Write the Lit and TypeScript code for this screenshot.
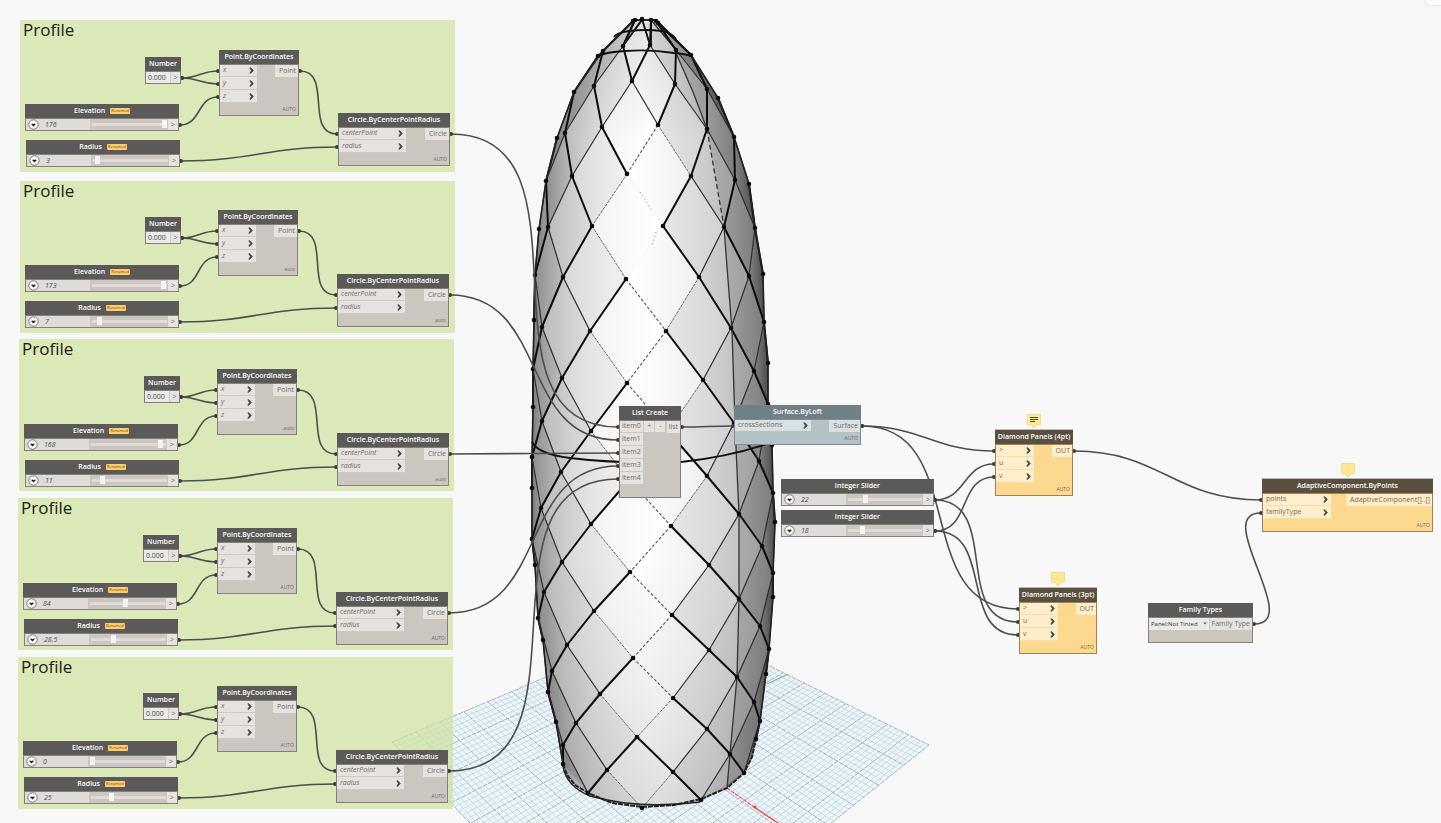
import { LitElement, html, svg, css, nothing } from "lit";
import { customElement, property } from "lit/decorators.js";
import { classMap } from "lit/directives/class-map.js";
import { styleMap } from "lit/directives/style-map.js";

type Pt = [number, number];

interface GraphNode {
  id: string;
  kind: "number" | "slider" | "function" | "list" | "types";
  title: string;
  x: number;
  y: number;
  w: number;
  tone?: "stone" | "steel" | "amber";
  inputs?: string[];
  inputWidth?: number;
  italic?: boolean;
  output?: string;
  lacing?: string;
  value?: string;
  max?: number;
  renamed?: boolean;
  note?: "lines" | "blank";
}

interface Group {
  x: number;
  y: number;
}

/* ---------- graph data ---------- */

const HEADER = 14;
const ROW = 13;

interface ProfileSpec {
  group: Pt;
  number: Pt;
  point: Pt;
  elevation: Pt;
  radius: Pt;
  circle: Pt;
  elevationValue: string;
  radiusValue: string;
  lacing: string;
}

const profiles: ProfileSpec[] = [
  { group: [20, 20], number: [145, 57], point: [219, 50], elevation: [25, 104], radius: [26, 140], circle: [338, 113], elevationValue: "176", radiusValue: "3", lacing: "AUTO" },
  { group: [20, 181], number: [145, 217], point: [218, 210], elevation: [25, 265], radius: [25, 301], circle: [337, 274], elevationValue: "173", radiusValue: "7", lacing: "auto" },
  { group: [19, 339], number: [144, 376], point: [217, 369], elevation: [24, 424], radius: [25, 460], circle: [337, 433], elevationValue: "168", radiusValue: "11", lacing: "auto" },
  { group: [18, 498], number: [143, 535], point: [217, 528], elevation: [23, 583], radius: [24, 619], circle: [336, 592], elevationValue: "84", radiusValue: "28.5", lacing: "AUTO" },
  { group: [18, 657], number: [143, 693], point: [217, 686], elevation: [23, 741], radius: [24, 777], circle: [336, 750], elevationValue: "0", radiusValue: "25", lacing: "AUTO" },
];

const groups: Group[] = profiles.map((p) => ({ x: p.group[0], y: p.group[1] }));

const nodes: GraphNode[] = [
  ...profiles.flatMap((p, i): GraphNode[] => [
    { id: `number${i}`, kind: "number", title: "Number", x: p.number[0], y: p.number[1], w: 36, value: "0.000" },
    { id: `point${i}`, kind: "function", title: "Point.ByCoordinates", x: p.point[0], y: p.point[1], w: 80, inputs: ["x", "y", "z"], inputWidth: 37, italic: true, output: "Point", lacing: p.lacing },
    { id: `elevation${i}`, kind: "slider", title: "Elevation", x: p.elevation[0], y: p.elevation[1], w: 154, value: p.elevationValue, max: 176, renamed: true },
    { id: `radius${i}`, kind: "slider", title: "Radius", x: p.radius[0], y: p.radius[1], w: 154, value: p.radiusValue, max: 100, renamed: true },
    { id: `circle${i}`, kind: "function", title: "Circle.ByCenterPointRadius", x: p.circle[0], y: p.circle[1], w: 112, inputs: ["centerPoint", "radius"], inputWidth: 67, italic: true, output: "Circle", lacing: p.lacing },
  ]),
  { id: "list", kind: "list", title: "List Create", x: 619, y: 406, w: 62, inputs: ["item0", "item1", "item2", "item3", "item4"], inputWidth: 23, output: "list" },
  { id: "loft", kind: "function", tone: "steel", title: "Surface.ByLoft", x: 734, y: 405, w: 127, inputs: ["crossSections"], inputWidth: 76, output: "Surface", lacing: "AUTO" },
  { id: "u", kind: "slider", title: "Integer Slider", x: 781, y: 479, w: 153, value: "22", max: 100 },
  { id: "v", kind: "slider", title: "Integer Slider", x: 781, y: 510, w: 153, value: "18", max: 100 },
  { id: "four", kind: "function", tone: "amber", title: "Diamond Panels (4pt)", x: 995, y: 430, w: 78, inputs: [">", "u", "v"], inputWidth: 38, output: "OUT", lacing: "AUTO", note: "lines" },
  { id: "three", kind: "function", tone: "amber", title: "Diamond Panels (3pt)", x: 1019, y: 588, w: 78, inputs: [">", "u", "v"], inputWidth: 38, output: "OUT", lacing: "AUTO", note: "blank" },
  { id: "adaptive", kind: "function", tone: "amber", title: "AdaptiveComponent.ByPoints", x: 1262, y: 479, w: 171, inputs: ["points", "familyType"], inputWidth: 68, output: "AdaptiveComponent[]..[]", lacing: "AUTO", note: "blank" },
  { id: "types", kind: "types", title: "Family Types", x: 1148, y: 603, w: 105, value: "Panel:Not Tinted", output: "Family Type" },
];

const links: [string, string, number][] = [
  ...profiles.flatMap((_, i): [string, string, number][] => [
    [`number${i}`, `point${i}`, 0],
    [`number${i}`, `point${i}`, 1],
    [`elevation${i}`, `point${i}`, 2],
    [`point${i}`, `circle${i}`, 0],
    [`radius${i}`, `circle${i}`, 1],
    [`circle${i}`, "list", i],
  ]),
  ["list", "loft", 0],
  ["loft", "four", 0],
  ["loft", "three", 0],
  ["u", "four", 1],
  ["v", "four", 2],
  ["u", "three", 1],
  ["v", "three", 2],
  ["four", "adaptive", 0],
  ["types", "adaptive", 1],
];

const byId = new Map(nodes.map((n) => [n.id, n]));
const outPort = (n: GraphNode): Pt => [n.x + n.w + 1, n.y + HEADER + 7];
const inPort = (n: GraphNode, i: number): Pt => [n.x - 1, n.y + HEADER + 7 + ROW * i];

/* ---------- tower geometry ---------- */

const tower: Pt[][] = [
  [[633, 21], [635, 20], [642, 19], [651, 20], [656, 21], [658, 23]],
  [[598, 56], [603, 51], [623, 46], [650, 45], [676, 50], [691, 55]],
  [[574, 92], [594, 86], [632, 81], [675, 84], [707, 89], [718, 98]],
  [[557, 138], [565, 133], [602, 127], [658, 125], [707, 129], [734, 137]],
  [[546, 181], [572, 176], [627, 174], [691, 176], [735, 180], [749, 184]],
  [[539, 229], [548, 227], [592, 226], [663, 226], [724, 227], [755, 228]],
  [[535, 275], [563, 277], [626, 279], [699, 277], [749, 276], [763, 274]],
  [[534, 320], [542, 327], [590, 331], [666, 331], [731, 328], [764, 322]],
  [[533, 369], [562, 378], [627, 383], [703, 380], [754, 371], [768, 363]],
  [[533, 407], [542, 421], [591, 431], [668, 431], [734, 423], [768, 404]],
  [[532, 457], [561, 472], [629, 480], [707, 476], [759, 461], [772, 445]],
  [[532, 488], [541, 508], [591, 524], [671, 526], [739, 514], [773, 493]],
  [[532, 539], [562, 562], [630, 572], [709, 565], [762, 546], [775, 522]],
  [[535, 565], [544, 592], [594, 611], [672, 615], [739, 599], [773, 573]],
  [[538, 618], [567, 645], [633, 658], [709, 650], [760, 626], [773, 597]],
  [[543, 640], [552, 671], [600, 694], [673, 698], [737, 677], [769, 649]],
  [[548, 692], [576, 723], [637, 737], [707, 729], [754, 702], [766, 674]],
  [[556, 722], [563, 745], [607, 770], [673, 772], [730, 754], [760, 721]],
  [[563, 764], [588, 793], [642, 808], [701, 800], [744, 773], [756, 739]],
];

const shadeEven = [["#7a7a7a", "#a0a0a0"], ["#bababa", "#dedede"], ["#f4f4f4", "#ffffff"], ["#e6e6e6", "#d2d2d2"], ["#b4b4b4", "#909090"], ["#777777", "#4c4c4c"]];
const shadeOdd = [["#6c6c6c", "#8a8a8a"], ["#8e8e8e", "#bcbcbc"], ["#d8d8d8", "#f2f2f2"], ["#ffffff", "#f0f0f0"], ["#d4d4d4", "#b8b8b8"], ["#989898", "#585858"]];

const pts = (list: Pt[]) => list.map((p) => p.join(",")).join(" ");

const left = tower.map((r) => r[0]);
const right = tower.map((r) => r[5]);
const base: Pt[] = [[563, 764], [567, 775], [575, 785], [588, 793], [612, 803], [642, 807], [674, 805], [701, 799], [727, 788], [744, 773], [752, 757], [756, 739]];
const outline: Pt[] = [...left, ...base, ...right.slice().reverse()];
const seam: Pt[] = [[676, 53], [693, 92], [707, 129], [724, 227], [728, 280], [732, 330], [735, 424], [737, 470], [739, 514], [739, 599], [737, 677], [730, 754], [727, 788]];

function facets() {
  const out = [];
  const last = tower.length - 1;
  for (let k = -1; k < last; k++) {
    for (let i = 0; i < 6; i++) {
      const row = k + 1;
      const even = row % 2 === 0;
      const top = tower[Math.max(k, 0)][i];
      const bottom = tower[Math.min(k + 2, last)][i];
      // neighbours sit in the row between the top and bottom corners
      const mid = tower[row];
      const l = even ? mid[i - 1] : mid[i];
      const r = even ? mid[i] : mid[i + 1];
      if (!l || !r) continue;
      const name = even ? `odd${i}` : `even${i}`;
      const corners = k < 0 ? [l, r, bottom] : k + 2 > last ? [top, r, l] : [top, r, bottom, l];
      out.push(svg`<polygon points=${pts(corners)} fill="url(#${name})" />`);
    }
  }
  return out;
}

function ribs() {
  const out = [];
  for (let k = 0; k < tower.length - 1; k++) {
    const even = k % 2 === 0;
    for (let i = 0; i < 6; i++) {
      const from = tower[k][i];
      const ends: [Pt | undefined, boolean, number][] = even
        ? [[tower[k + 1][i], true, i], [tower[k + 1][i + 1], false, i + 1]]
        : [[tower[k + 1][i - 1], true, i], [tower[k + 1][i], false, i]];
      for (const [to, leaning, col] of ends) {
        if (!to) continue;
        const mid = (from[0] + to[0]) / 2;
        const leftSide = mid < 640;
        const strong = k < 5 ? leaning !== leftSide : leaning === leftSide;
        const centre = mid > 628 && mid < 662 && k > 1;
        if (centre && (k === 4 || k === 5) && col === 3) continue;
        let cls = strong ? "rib strong" : "rib";
        if (centre && k < 15 && k !== 2) cls = strong || !leftSide ? "rib broken" : "rib faint";
        else if (!strong && mid > 596 && mid < 690 && k > 2) cls = "rib faint";
        out.push(svg`<line class=${cls} x1=${from[0]} y1=${from[1]} x2=${to[0]} y2=${to[1]} />`);
      }
    }
  }
  return out;
}

/* ---------- ground grid ---------- */

const ground = { l: [392, 742] as Pt, t: [679, 621] as Pt, r: [929, 745] as Pt, b: [627, 986] as Pt };
const lerp = (a: Pt, b: Pt, t: number): Pt => [a[0] + (b[0] - a[0]) * t, a[1] + (b[1] - a[1]) * t];

function gridPath(major: boolean) {
  const steps = 60;
  let d = "";
  for (let i = 0; i <= steps; i++) {
    if ((i % 5 === 0) !== major) continue;
    const t = i / steps;
    const a = lerp(ground.l, ground.t, t);
    const b = lerp(ground.b, ground.r, t);
    const c = lerp(ground.l, ground.b, t);
    const e = lerp(ground.t, ground.r, t);
    d += `M${a[0].toFixed(1)} ${a[1].toFixed(1)}L${b[0].toFixed(1)} ${b[1].toFixed(1)}`;
    d += `M${c[0].toFixed(1)} ${c[1].toFixed(1)}L${e[0].toFixed(1)} ${e[1].toFixed(1)}`;
  }
  return d;
}

/* ---------- geometry preview ---------- */

@customElement("tower-preview")
export class TowerPreview extends LitElement {
  static styles = css`
    :host { display: block; width: 100%; height: 100%; }
    svg { display: block; width: 100%; height: 100%; overflow: visible; }
    .rib { stroke: #2e2e2e; stroke-width: 1.2; }
    .strong { stroke: #0c0c0c; stroke-width: 2; }
    .faint { stroke: #6a6a6a; stroke-width: 1; stroke-dasharray: 3 1; }
    .broken { stroke: #555; stroke-width: 1.1; stroke-dasharray: 3 2; }
    .edge { fill: none; stroke: #222; stroke-width: 1.6; stroke-linejoin: round; }
    .rim { stroke-width: 2; stroke-dasharray: 5 1; }
    .ring { fill: none; stroke: #111; stroke-width: 1.8; }
    .seam { fill: none; stroke: #333; stroke-width: 1.3; }
    .knot { fill: #0c0c0c; }
  `;

  render() {
    return html`
      <svg role="img" aria-label="Panelised tower">
        <defs>
          ${[["even", shadeEven], ["odd", shadeOdd]].map(([name, set]) =>
            (set as string[][]).map((s, i) => svg`
              <linearGradient id="${name}${i}">
                <stop offset="0" stop-color=${s[0]} />
                <stop offset="1" stop-color=${s[1]} />
              </linearGradient>`)
          )}
          <linearGradient id="shell">
            <stop offset="0" stop-color="#6a6a6a" />
            <stop offset="0.2" stop-color="#c8c8c8" />
            <stop offset="0.5" stop-color="#eeeeee" />
            <stop offset="0.8" stop-color="#b0b0b0" />
            <stop offset="1" stop-color="#474747" />
          </linearGradient>
          <linearGradient id="dim" x1="0" y1="0" x2="0" y2="1">
            <stop offset="0" stop-color="#000" stop-opacity="0.1" />
            <stop offset="0.15" stop-color="#000" stop-opacity="0" />
            <stop offset="0.68" stop-color="#000" stop-opacity="0" />
            <stop offset="0.85" stop-color="#000" stop-opacity="0.05" />
            <stop offset="1" stop-color="#000" stop-opacity="0.12" />
          </linearGradient>
        </defs>
        <polygon points=${pts([ground.l, ground.t, ground.r, ground.b])} fill="#eef5f9" />
        <path d=${gridPath(false)} fill="none" stroke="#b6d3e2" stroke-width="0.7" />
        <path d=${gridPath(true)} fill="none" stroke="#8ea4b1" stroke-width="0.8" stroke-dasharray="5 1" />
        <path d="M767 684L788 674" stroke="#5fbf5f" stroke-width="1" />
        <path d="M727 788L754 807" stroke="#f05050" stroke-width="1.2" stroke-dasharray="4 1" />
        <path d="M754 807L778 823" stroke="#f04848" stroke-width="1.4" />
        <circle cx="755" cy="807" r="1.5" fill="#e03c3c" />

        <polygon points=${pts(outline)} fill="url(#shell)" />
        ${facets()}
        <polygon points=${pts([...seam, [744, 773], ...right.slice(1).reverse()])} fill="#000" fill-opacity="0.13" />
        <polygon points=${pts(outline)} fill="url(#dim)" />
        ${ribs()}
        <polyline class="edge" points=${pts(left)} />
        <polyline class="edge" points=${pts(right)} />
        <polyline class="edge rim" points=${pts(base)} />
        <path class="edge" d="M563 766Q566 786 590 796Q640 810 700 802" stroke-width="1" />
        <polyline class="seam" points=${pts(seam.slice(0, 3))} />
        <polyline class="seam" points=${pts(seam.slice(2, 4))} stroke-dasharray="5 3" />
        <polyline class="seam" points=${pts(seam.slice(3))} />
        <path d="M640 192L653 212M656 232L652 245" fill="none" stroke="#888" stroke-width="1" stroke-dasharray="1 3" />
        <path class="ring" d="M633 20H656" />
        <path class="ring" d="M614 37Q616 33 629 31Q646 29 662 31Q674 34 676 39" />
        <path class="ring" d="M598 56Q606 52 625 51Q650 49 674 53Q686 54 691 56" />
        <path class="ring" d="M642 20L623 46M635 20L623 46M642 19L650 45M651 20V45M656 21L676 50M658 22L691 55" />
        <path class="ring" d="M532 442Q538 454 570 458Q619 464 681 462Q728 457 770 443" />
        ${tower.flatMap((row) => row.map((p) => svg`<circle class="knot" cx=${p[0]} cy=${p[1]} r="2.3" />`))}
      </svg>
    `;
  }
}

/* ---------- node ---------- */

@customElement("graph-node")
export class GraphNodeElement extends LitElement {
  @property({ attribute: false }) node!: GraphNode;

  static styles = css`
    :host { display: block; font: 7px/12px "Open Sans", "Noto Sans", sans-serif; color: #6f6c69; }
    * { box-sizing: border-box; }
    .node { --head: #5c5a58; --body: #cbc6bf; --port: #e5e2df; --line: #cdc9c4; --rim: #84807c; background: var(--body); }
    .steel { --head: #6f8087; --body: #b4c2c6; --port: #d8e0e2; --line: #b4c2c6; --rim: #7d9097; }
    .amber { --head: #5b503f; --body: #fcd98f; --port: #ffeecb; --line: #f8dfa8; --rim: #9a8558; color: #7a6950; box-shadow: 0 -1px 0 #bdbab3; }
    .head { display: flex; align-items: center; justify-content: center; gap: 5px; height: 14px; background: var(--head); }
    .body { outline: 1px solid var(--rim); outline-offset: -1px; }
    h3 { margin: 0; font: 600 7px/14px "Open Sans", "Noto Sans", sans-serif; color: #fff; white-space: nowrap; }
    .tag { height: 6px; padding: 0 1px; background: #ffcb6b; border-radius: 1px; font-size: 4px; line-height: 6px; color: #6b5020; }
    .ports { display: flex; justify-content: space-between; align-items: flex-start; padding: 0 1px; }
    .row { display: flex; align-items: center; justify-content: space-between; height: 13px; padding: 0 3px 0 3px; background: var(--port); border-bottom: 1px solid var(--line); white-space: nowrap; }
    .italic { font-style: italic; }
    .out { height: 13px; padding: 0 2px 0 4px; background: var(--port); line-height: 13px; white-space: nowrap; }
    .foot { height: 13px; padding-right: 3px; text-align: right; font-size: 5px; line-height: 13px; }
    button, input, select { font: inherit; color: inherit; margin: 0; padding: 0; border: 0; background: none; border-radius: 0; }
    button { display: flex; align-items: center; justify-content: center; }
    .bar { display: flex; align-items: center; height: 13px; padding: 0 1px; background: var(--body); }
    .open { width: 15px; height: 11px; background: #dedbd8; }
    .value { width: 49px; height: 11px; padding: 0 4px; background: #dedbd8; font-style: italic; color: #4b4947; }
    .plug { width: 10px; height: 11px; background: var(--port); line-height: 11px; text-align: center; }
    .range { flex: 1; min-width: 0; height: 11px; margin: 0 1px 0 2px; appearance: none; -webkit-appearance: none; }
    .range::-webkit-slider-runnable-track { height: 3px; background: #dfdcd8; }
    .range::-webkit-slider-thumb { -webkit-appearance: none; width: 5px; height: 8px; margin-top: -3px; background: #f5f4f2; }
    .num { flex: 1; min-width: 0; height: 11px; padding: 0 2px; background: #eceae8; color: #4b4947; }
    .split { border-left: 1px solid #cfcbc7; }
    .tools { display: flex; gap: 1px; }
    .tool { width: 10px; height: 12px; background: var(--port); }
    .list .row { padding: 0 2px; }
    .list .out { padding: 0 2px; }
    .pick { display: grid; grid-template-columns: minmax(0, 1fr); flex: 1; min-width: 0; height: 13px; align-items: center; background: #eceae8; }
    .pick > * { grid-area: 1 / 1; }
    select { appearance: none; -webkit-appearance: none; width: 100%; padding-left: 2px; font-size: 6px; color: #3a3836; line-height: 12px; }
    .caret { justify-self: end; margin-right: 2px; pointer-events: none; }
    .types .out { padding-left: 2px; }
    .note { position: absolute; bottom: 100%; left: 50%; transform: translateX(-50%); display: block; margin-bottom: 1px; }
    svg { display: block; }
  `;

  private input(label: string) {
    const n = this.node;
    return html`
      <div class=${classMap({ row: true, italic: !!n.italic })}>
        <span>${label}</span>
        ${n.kind === "function"
          ? html`<button aria-label="Use levels for ${label}">
              <svg width="5" height="7" viewBox="0 0 5 7"><path d="M0.8 0.8H2L4.4 3.5L2 6.2H0.8L2.4 3.5Z" fill="#4a4846" stroke="#4a4846" stroke-width="0.7" /></svg>
            </button>`
          : nothing}
      </div>
    `;
  }

  private body() {
    const n = this.node;
    switch (n.kind) {
      case "number":
        return html`<div class="bar">
          <input class="num" aria-labelledby="title" .value=${n.value ?? ""} />
          <span class="plug split">&gt;</span>
        </div>`;
      case "slider":
        return html`<div class="bar">
          <button class="open" aria-label="Range settings">
            <svg width="11" height="11" viewBox="0 0 11 11">
              <circle cx="5.5" cy="5.5" r="4.7" fill="#fff" stroke="#6c6a68" stroke-width="0.9" />
              <path d="M3.7 4.7L5.5 6.5L7.3 4.7" fill="none" stroke="#222" stroke-width="1.4" />
            </svg>
          </button>
          <input class="value" aria-labelledby="title" .value=${n.value ?? ""} />
          <input class="range" type="range" aria-labelledby="title" min="0" max=${n.max ?? 100} step="0.5" .value=${n.value ?? "0"} />
          <span class="plug">&gt;</span>
        </div>`;
      case "types":
        return html`<div class="ports">
            <div class="pick">
              <select aria-labelledby="title"><option>${n.value}</option></select>
              <svg class="caret" width="4" height="3" viewBox="0 0 4 3"><path d="M0 0.5H4L2 2.5Z" fill="#666" /></svg>
            </div>
            <div class="out split">${n.output}</div>
          </div>
          <div class="foot"></div>`;
      default:
        return html`<div class="ports">
            <div class="items" style=${styleMap({ width: `${n.inputWidth}px` })}>${n.inputs?.map((i) => this.input(i))}</div>
            ${n.kind === "list"
              ? html`<div class="tools"><button class="tool">+</button><button class="tool">-</button></div>`
              : nothing}
            <div class="out">${n.output}</div>
          </div>
          <div class="foot">${n.lacing}</div>`;
    }
  }

  render() {
    const n = this.node;
    return html`
      ${n.note
        ? html`<svg class="note" width="14" height="15" viewBox="0 0 14 15">
            <path d="M0.5 0.5H13.5V10.5H10L7 14L4 10.5H0.5Z" fill="#ffe88f" stroke="#e6d486" stroke-width="0.7" />
            ${n.note === "lines" ? svg`<path d="M3 3.5H11M3 5.5H11M3 7.5H8" stroke="#4a4630" stroke-width="1" />` : nothing}
          </svg>`
        : nothing}
      <article class=${classMap({ node: true, [n.tone ?? "stone"]: true, [n.kind]: true })}>
        <div class="head">
          <h3 id="title">${n.title}</h3>
          ${n.renamed ? html`<span class="tag">Renamed</span>` : nothing}
        </div>
        <div class="body">${this.body()}</div>
      </article>
    `;
  }
}

/* ---------- workspace ---------- */

@customElement("app-root")
export class AppRoot extends LitElement {
  static styles = css`
    :host { display: block; position: relative; min-height: 100vh; overflow: hidden; background: #f8f8f8; font-family: "Open Sans", "Noto Sans", sans-serif; }
    * { box-sizing: border-box; }
    .scene, .wires { position: absolute; inset: 0; width: 100%; height: 100%; }
    .group { position: absolute; width: 435px; height: 152px; padding: 0 3px; background: rgba(207, 225, 155, 0.7); }
    .group h2 { margin: 0; font-size: 17px; font-weight: 400; line-height: 20px; color: #1c2014; }
    .wire { fill: none; stroke: #4e4e4e; stroke-width: 1.6; }
    .dot { fill: #3c3c3c; }
    .slot { position: absolute; }
    .corner { position: absolute; top: 0; right: 0; width: 15px; height: 5px; padding: 0; border: 0; background: #fff; border-radius: 0 0 0 3px; box-shadow: 0 0 2px #bbb; }
  `;

  private wire([from, to, index]: [string, string, number]) {
    const [x1, y1] = outPort(byId.get(from)!);
    const [x2, y2] = inPort(byId.get(to)!, index);
    const c = 0.45 * Math.hypot(x2 - x1, y2 - y1);
    return svg`
      <path class="wire" d="M${x1} ${y1}C${x1 + c} ${y1} ${x2 - c} ${y2} ${x2} ${y2}" />
      <circle class="dot" cx=${x1} cy=${y1} r="2" />
      <circle class="dot" cx=${x2} cy=${y2} r="2" />
    `;
  }

  render() {
    return html`
      <tower-preview class="scene"></tower-preview>
      ${groups.map(
        (g) => html`<section class="group" style=${styleMap({ left: `${g.x}px`, top: `${g.y}px` })}><h2>Profile</h2></section>`
      )}
      <svg class="wires" aria-hidden="true">${links.map((l) => this.wire(l))}</svg>
      ${nodes.map(
        (n) => html`<graph-node class="slot" .node=${n} style=${styleMap({ left: `${n.x}px`, top: `${n.y}px`, width: `${n.w}px` })}></graph-node>`
      )}
      <button class="corner" aria-label="View controls"></button>
    `;
  }
}
